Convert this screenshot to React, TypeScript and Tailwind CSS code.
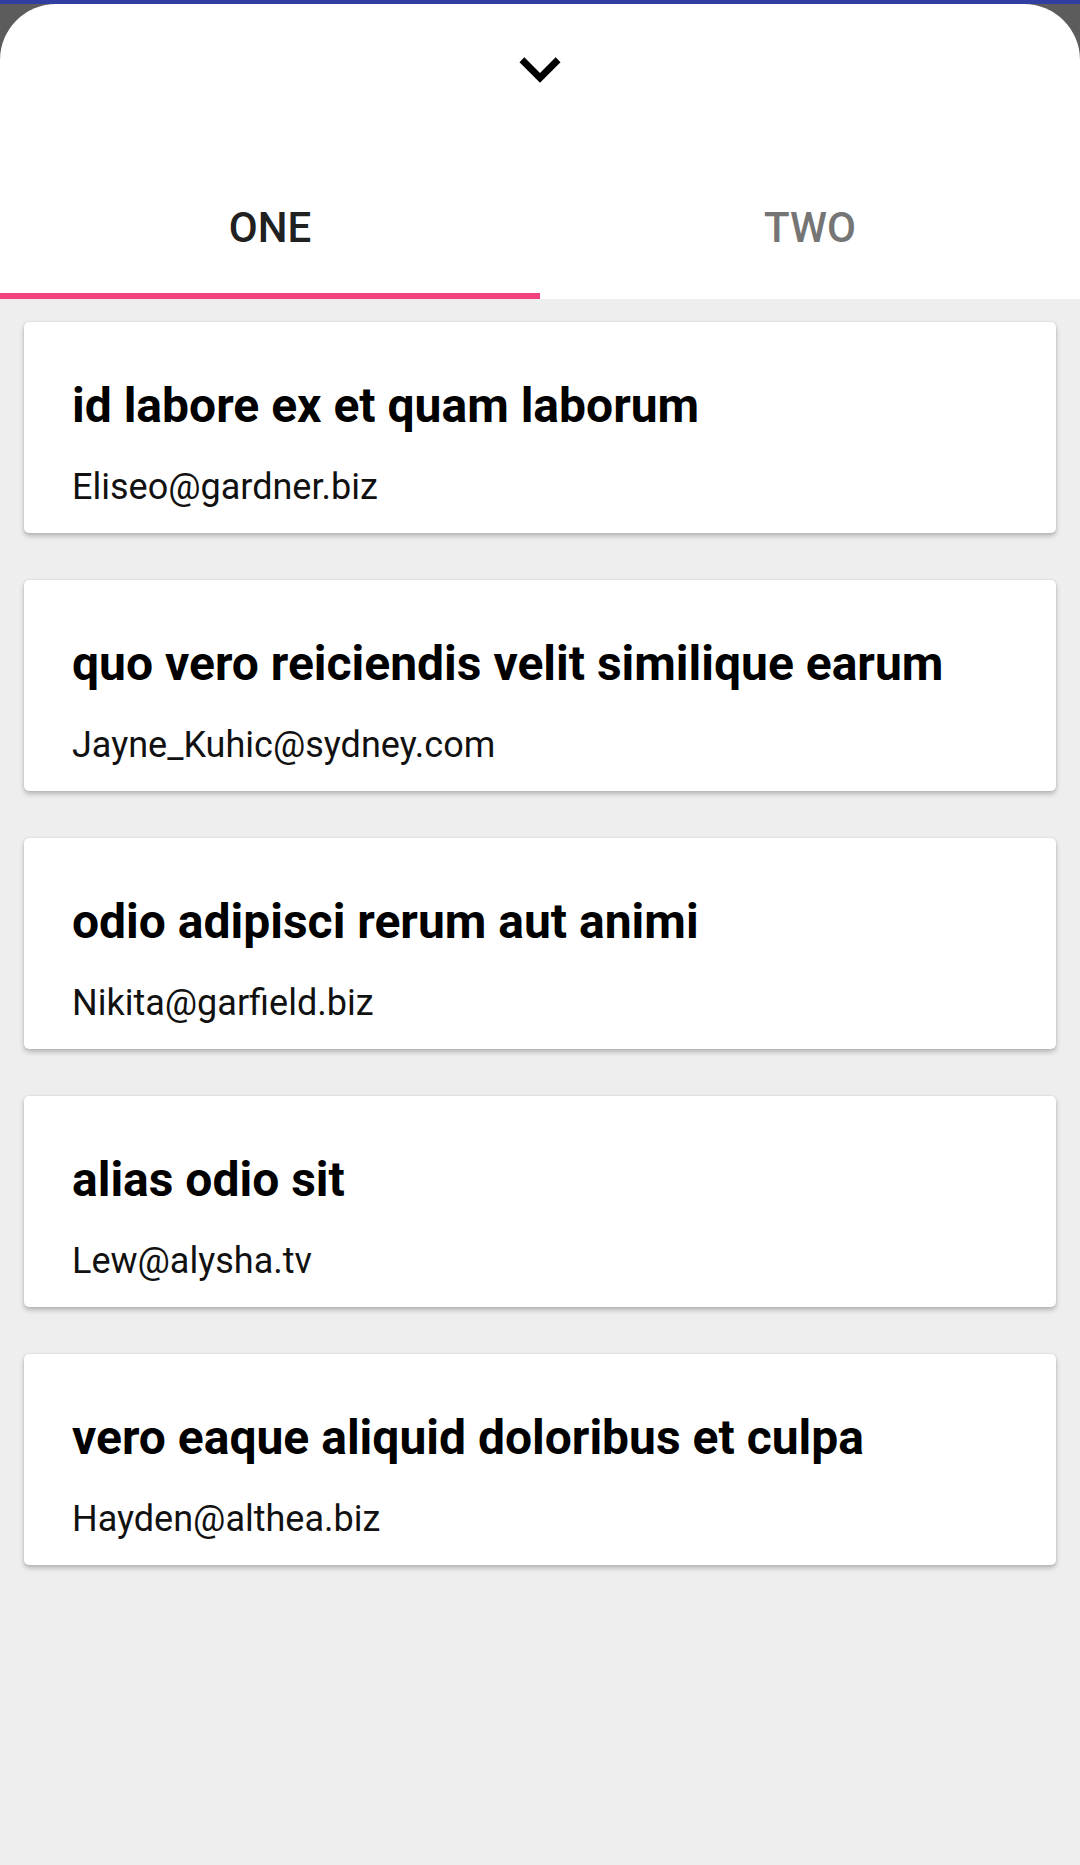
const posts = [
    { title: "id labore ex et quam laborum", email: "Eliseo@gardner.biz" },
    { title: "quo vero reiciendis velit similique earum", email: "Jayne_Kuhic@sydney.com" },
    { title: "odio adipisci rerum aut animi", email: "Nikita@garfield.biz" },
    { title: "alias odio sit", email: "Lew@alysha.tv" },
    { title: "vero eaque aliquid doloribus et culpa", email: "Hayden@althea.biz" },
];

const App = () => {
    const active = "one";

    return (
        <div className="w-[1080px] min-h-[1865px] bg-[#5c5c5c] font-['Roboto',sans-serif] flex flex-col">
            <div className="h-[4px] w-full bg-[#303f9f]" />
            <div className="flex-1 flex flex-col bg-white rounded-t-[56px] overflow-hidden">
                {/* handle */}
                <div className="h-[149px] flex justify-center pt-[24px]">
                    <svg xmlns="http://www.w3.org/2000/svg" viewBox="0 0 24 24" width="82" height="82" fill="#000">
                        <path d="M16.59 8.59L12 13.17 7.41 8.59 6 10l6 6 6-6z" />
                    </svg>
                </div>

                {/* tabs */}
                <div className="flex">
                    {["ONE", "TWO"].map((tab) => {
                        const isActive = tab.toLowerCase() === active;
                        return (
                            <button
                                key={tab}
                                className={`w-1/2 h-[146px] pt-[54px] flex justify-center items-start text-[42px] leading-[42px] font-medium ${
                                    isActive ? "text-[#212121] border-b-[6px] border-[#f2417f]" : "text-[#757575]"
                                }`}
                            >
                                {tab}
                            </button>
                        );
                    })}
                </div>

                {/* list */}
                <div className="flex-1 bg-[#eeeeee] px-[24px] pt-[23px] flex flex-col gap-[47px]">
                    {posts.map((post, idx) => (
                        <div
                            key={idx}
                            className="h-[211px] bg-white rounded-[5px] px-[48px] pt-[60px] shadow-[0_3px_5px_rgba(0,0,0,0.24),0_0_2px_rgba(0,0,0,0.12)]"
                        >
                            <h2 className="text-[48px] leading-[48px] font-bold text-black whitespace-nowrap">{post.title}</h2>
                            <p className="mt-[39px] text-[36px] leading-[36px] text-[#111]">{post.email}</p>
                        </div>
                    ))}
                </div>
            </div>
        </div>
    );
};

export default App;
